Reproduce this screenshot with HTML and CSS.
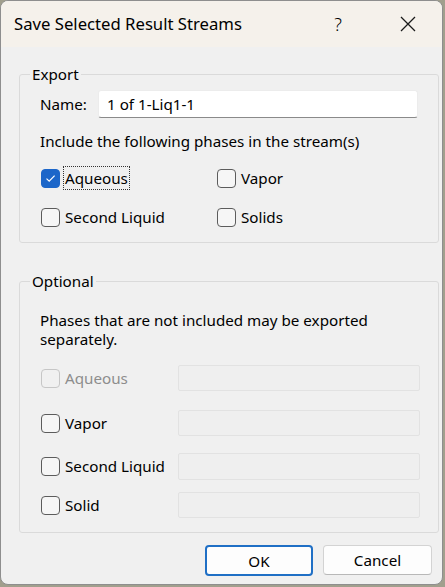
FILE: index.html
```html
<!DOCTYPE html>
<html>
<head>
<meta charset="utf-8">
<link rel="stylesheet" href="styles.css">
</head>
<body>
<div class="window">
  <div class="titlebar">
    <div class="title">Save Selected Result Streams</div>
    <div class="help">?</div>
    <div class="close">
      <svg width="16" height="16" viewBox="0 0 16 16"><path d="M1 1 L15 15 M15 1 L1 15" stroke="#1a1a1a" stroke-width="1.3" fill="none"/></svg>
    </div>
  </div>
  <div class="content">
    <fieldset class="group">
      <legend class="legend">Export</legend>
      <div class="group-body">
        <div class="name-row">
          <span class="name-label">Name:</span>
          <div class="input">1 of 1-Liq1-1</div>
        </div>
        <div class="line include">Include the following phases in the stream(s)</div>
        <div class="check-grid">
          <label class="check"><span class="cb checked"><svg width="11" height="9" viewBox="0 0 11 9"><path d="M1.5 4.6 L4.2 7.2 L9.6 1.6" stroke="#fff" stroke-width="1.2" fill="none"/></svg></span><span class="cb-text focus">Aqueous</span></label>
          <label class="check"><span class="cb"></span><span class="cb-text">Vapor</span></label>
          <label class="check"><span class="cb"></span><span class="cb-text">Second Liquid</span></label>
          <label class="check"><span class="cb"></span><span class="cb-text">Solids</span></label>
        </div>
      </div>
    </fieldset>

    <fieldset class="group optional">
      <legend class="legend">Optional</legend>
      <div class="group-body opt-body">
        <p class="note">Phases that are not included may be exported separately.</p>
        <div class="opt-grid">
          <label class="check disabled"><span class="cb"></span><span class="cb-text">Aqueous</span></label>
          <div class="field"></div>
          <label class="check"><span class="cb"></span><span class="cb-text">Vapor</span></label>
          <div class="field"></div>
          <label class="check"><span class="cb"></span><span class="cb-text">Second Liquid</span></label>
          <div class="field tall"></div>
          <label class="check"><span class="cb"></span><span class="cb-text">Solid</span></label>
          <div class="field"></div>
        </div>
      </div>
    </fieldset>

    <div class="footer">
      <button class="btn default">OK</button>
      <button class="btn">Cancel</button>
    </div>
  </div>
</div>
</body>
</html>
```

FILE: styles.css
```css
html, body {
  margin: 0;
  padding: 0;
}
body {
  background: #a19f8d;
  font-family: "Noto Sans", "Open Sans", sans-serif;
  font-size: 15.2px;
  color: #000;
  width: 445px;
  height: 587px;
  overflow: hidden;
}
.window {
  width: 443px;
  height: 585px;
  box-sizing: border-box;
  border: 1px solid #8e8e8e;
  border-radius: 8px;
  overflow: hidden;
  background: #f0f0f0;
  display: flex;
  flex-direction: column;
}
.titlebar {
  height: 46px;
  flex: none;
  background: #f5f1eb;
  display: flex;
  align-items: center;
  padding-left: 13px;
}
.title {
  flex: 1;
  font-size: 16.7px;
  line-height: 20px;
}
.help {
  width: 46px;
  margin-right: 13px;
  text-align: center;
  font-size: 18px;
  font-weight: 300;
  line-height: 20px;
}
.close {
  width: 68px;
  display: flex;
  justify-content: center;
  align-items: center;
  height: 20px;
}
.content {
  flex: 1;
  padding: 17px 3px 0 18px;
  display: flex;
  flex-direction: column;
}
.group {
  margin: 0;
  padding: 0;
  border: 1px solid #dadada;
  border-radius: 3px;
  min-width: 0;
}
.legend {
  padding: 0 2px;
  margin-left: 10px;
  line-height: 20px;
}
.group-body {
  padding: 6px 19px 13px 20px;
}
.name-row {
  display: flex;
  align-items: center;
}
.name-label {
  width: 58px;
  line-height: 20px;
}
.input {
  width: 320px;
  height: 28px;
  box-sizing: border-box;
  background: #fff;
  border: 1px solid #ececec;
  border-bottom: 1px solid #8a8a8a;
  border-radius: 3px;
  padding-left: 8px;
  line-height: 26px;
}
.line {
  line-height: 20px;
}
.include {
  margin-top: 13px;
}
.check-grid {
  margin-top: 15px;
  display: grid;
  grid-template-columns: 176px 176px;
  grid-auto-rows: 24px;
  row-gap: 15px;
}
.check {
  display: flex;
  align-items: center;
  height: 24px;
}
.cb {
  width: 19px;
  height: 19px;
  box-sizing: border-box;
  margin-left: 1px;
  border: 1px solid #5c5c5c;
  border-radius: 4px;
  background: #f6f6f6;
  display: flex;
  align-items: center;
  justify-content: center;
  flex: none;
}
.cb.checked {
  background: #1c66c9;
  border-color: #1c66c9;
}
.cb-text {
  margin-left: 4px;
  padding: 0 1px;
  line-height: 22px;
}
.cb-text.focus {
  outline: 1px dotted #333;
  outline-offset: 0;
}
.disabled .cb {
  border-color: #c6c6c6;
  background: #f0f0f0;
}
.disabled .cb-text {
  color: #8d8d8d;
}
.optional {
  margin-top: 28px;
}
.opt-body {
  padding-top: 20px;
  padding-bottom: 14px;
}
.note {
  margin: 0;
  max-width: 350px;
  line-height: 19px;
}
.opt-grid {
  margin-top: 16px;
  display: grid;
  grid-template-columns: 138px 242px;
  grid-template-rows: 45px 43px 39px 26px;
  align-items: start;
}
.opt-grid .check {
  height: 26px;
}
.field {
  height: 26px;
  box-sizing: border-box;
  border: 1px solid #e2e2e2;
  border-radius: 2px;
  background: #efefef;
}
.field.tall {
  height: 27px;
}
.footer {
  margin-top: 12px;
  margin-right: 7px;
  display: flex;
  justify-content: flex-end;
  gap: 10px;
}
.btn {
  width: 109px;
  height: 30px;
  box-sizing: border-box;
  background: #fdfdfd;
  border: 1px solid #d3d3d3;
  border-bottom-color: #b8b8b8;
  border-radius: 4px;
  font-family: "Noto Sans", "Open Sans", sans-serif;
  font-size: 15.2px;
  color: #000;
  padding: 0;
}
.btn.default {
  width: 108px;
  height: 31px;
  border: 2px solid #1f6fc5;
}
```
